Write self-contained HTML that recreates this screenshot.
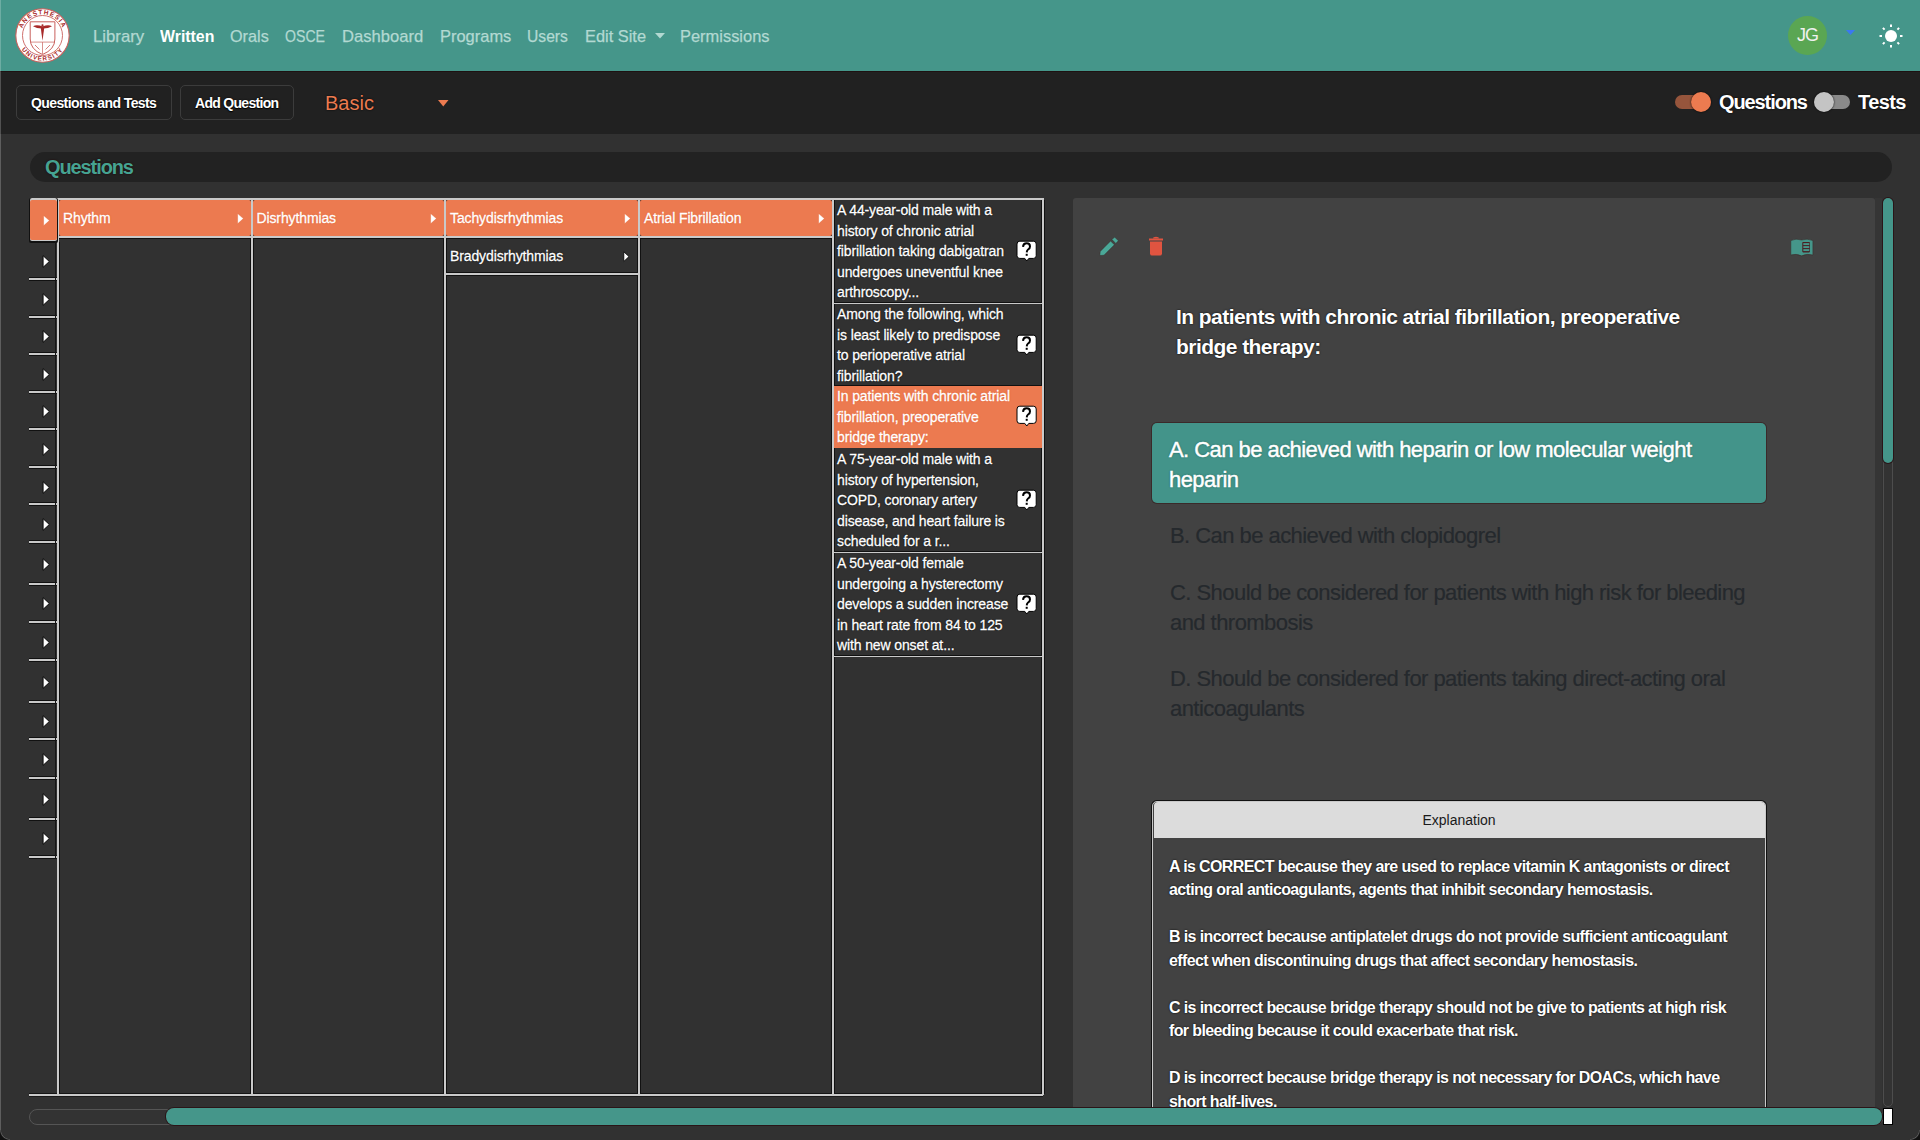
<!DOCTYPE html>
<html><head><meta charset="utf-8">
<style>
*{box-sizing:border-box;margin:0;padding:0}
html,body{-webkit-font-smoothing:antialiased;width:1920px;height:1140px;overflow:hidden;background:#313131;font-family:"Liberation Sans",sans-serif}
.abs{position:absolute}
#nav{position:absolute;left:0;top:0;width:1920px;height:71px;background:#45968a}
#navline{position:absolute;left:0;top:71px;width:1920px;height:1px;background:#1e1212}
.ni{position:absolute;top:27px;transform-origin:0 0;font-size:17px;line-height:20px;color:#b3d9d2;-webkit-text-stroke:0.25px #b3d9d2;white-space:nowrap}
#tool{position:absolute;left:0;top:72px;width:1920px;height:62px;background:#212121}
.btn{position:absolute;top:85px;height:35px;border:1px solid #3c3c3c;border-radius:5px;background:#212121}
.btxt{position:absolute;top:95px;font-size:14px;line-height:16px;font-weight:bold;color:#fff;white-space:nowrap;text-shadow:0 0 2px #000,0 1px 1px #000}
#pill{position:absolute;left:30px;top:152px;width:1862px;height:30px;border-radius:15px;background:#222}
.cell{position:absolute;font-size:14px;line-height:20.5px;color:#fff;white-space:nowrap;letter-spacing:-0.12px;-webkit-text-stroke:0.3px #fff;text-shadow:0 0 1.5px #000,0 0 1px #000}
</style></head><body>
<div id="nav"></div>
<div id="navline"></div>
<div id="tool"></div>

<!-- logo -->
<svg class="abs" style="left:15px;top:8px" width="55" height="55" viewBox="0 0 55 55">
 <defs>
  <path id="arcT" d="M6.3 27.5 A21.2 21.2 0 0 1 48.7 27.5"/>
  <path id="arcB" d="M2.3 27.5 A25.2 25.2 0 0 0 52.7 27.5"/>
 </defs>
 <circle cx="27.5" cy="27.5" r="26.7" fill="#fff" stroke="#c9605c" stroke-width="1.1"/>
 <circle cx="27.5" cy="27.5" r="20" fill="none" stroke="#c9605c" stroke-width="0.9"/>
 <text font-size="6.4" fill="#a82a2a" font-family="Liberation Sans" font-weight="bold" letter-spacing="1.1"><textPath href="#arcT" startOffset="50%" text-anchor="middle">ANESTHESIA</textPath></text>
 <text font-size="6.2" fill="#a82a2a" font-family="Liberation Sans" font-weight="bold" letter-spacing="1.2"><textPath href="#arcB" startOffset="50%" text-anchor="middle">UNIVERSITY</textPath></text>
 <path d="M15.2 13.8 H39.9 V31 Q39.9 41.5 27.5 46.5 Q15.2 41.5 15.2 31 Z" fill="#fff" stroke="#c9605c" stroke-width="1"/>
 <path d="M15.2 34.1 H39.9 M27.5 34.1 V46" stroke="#c9605c" stroke-width="0.7"/>
 <path d="M18 18.2 Q22 16.2 27.5 18.6 Q33 16.2 37 18.2 Q33 20.6 27.5 20.4 Q22 20.6 18 18.2Z" fill="#a82a2a"/>
 <path d="M25.6 18.5 H29.4 L27.5 32.8 Z" fill="#a82a2a"/>
 <circle cx="27.5" cy="17.3" r="1.1" fill="#a82a2a"/>
 <path d="M20 37 L24.5 41.5 M30.5 41.5 L35 37" stroke="#c9605c" stroke-width="0.8"/>
</svg>
<div class="ni" style="left:93.0px;transform:scaleX(0.986)">Library</div>
<div class="ni" style="left:159.8px;transform:scaleX(0.934);color:#fff;font-weight:bold;-webkit-text-stroke:0">Written</div>
<div class="ni" style="left:230.4px;transform:scaleX(0.954)">Orals</div>
<div class="ni" style="left:285.4px;transform:scaleX(0.830)">OSCE</div>
<div class="ni" style="left:341.7px;transform:scaleX(0.977)">Dashboard</div>
<div class="ni" style="left:439.5px;transform:scaleX(0.968)">Programs</div>
<div class="ni" style="left:527.1px;transform:scaleX(0.921)">Users</div>
<div class="ni" style="left:584.8px;transform:scaleX(0.964)">Edit Site</div>
<div class="ni" style="left:679.5px;transform:scaleX(0.967)">Permissions</div>
<svg class="abs" style="left:655px;top:33px" width="10" height="6"><path d="M0 0H10L5 5.5Z" fill="#b3d9d2"/></svg>
<!-- avatar -->
<div class="abs" style="left:1788px;top:16px;width:39px;height:39px;border-radius:50%;background:#5aa653;color:#f0f0f0;font-size:18px;line-height:39px;text-align:center;letter-spacing:-1px">JG</div>
<svg class="abs" style="left:1846px;top:30px" width="10" height="6"><path d="M0 0H9L4.5 5Z" fill="#3a78f2"/></svg>
<svg class="abs" style="left:1878px;top:23px" width="26" height="26" viewBox="0 0 26 26">
 <circle cx="13" cy="13" r="6" fill="#fff"/>
 <g stroke="#fff" stroke-width="2" stroke-linecap="butt">
  <path d="M13 1.5V4 M13 22V24.5 M1.5 13H4 M22 13H24.5 M4.9 4.9L6.6 6.6 M19.4 19.4L21.1 21.1 M4.9 21.1L6.6 19.4 M19.4 6.6L21.1 4.9"/>
 </g>
</svg>
<!-- toolbar -->
<div class="btn" style="left:16px;width:156px"></div>
<div class="btxt" style="left:31px;letter-spacing:-0.6px">Questions and Tests</div>
<div class="btn" style="left:180px;width:114px"></div>
<div class="btxt" style="left:195px;letter-spacing:-0.7px">Add Question</div>
<div class="abs" style="left:325px;top:92px;font-size:20px;line-height:22px;color:#ec7b50;text-shadow:0 0 2px #000">Basic</div>
<svg class="abs" style="left:438px;top:100px" width="11" height="7"><path d="M0 0H10.5L5.25 6.5Z" fill="#ec7b50"/></svg>
<!-- toggles -->
<div class="abs" style="left:1675px;top:95px;width:36px;height:14px;border-radius:7px;background:#96553c"></div>
<div class="abs" style="left:1691px;top:92px;width:20px;height:20px;border-radius:50%;background:#ec7b50;box-shadow:0 0 2px #000"></div>
<div class="abs" style="left:1719px;top:91px;font-size:20px;line-height:22px;font-weight:bold;color:#fff;letter-spacing:-1.1px;text-shadow:0 0 2px #000">Questions</div>
<div class="abs" style="left:1814px;top:95px;width:36px;height:14px;border-radius:7px;background:#8a8a8a"></div>
<div class="abs" style="left:1814px;top:92px;width:20px;height:20px;border-radius:50%;background:#c4c4c4;box-shadow:0 0 2px #000"></div>
<div class="abs" style="left:1858px;top:91px;font-size:20px;line-height:22px;font-weight:bold;color:#fff;letter-spacing:-0.6px;text-shadow:0 0 2px #000">Tests</div>
<div class="abs" style="left:59px;top:242px;width:1px;height:851px;background:#111"></div>
<div class="abs" style="left:249.5px;top:239px;width:1px;height:854px;background:#111"></div>
<div class="abs" style="left:252.5px;top:239px;width:1px;height:854px;background:#111"></div>
<div class="abs" style="left:443px;top:239px;width:1px;height:854px;background:#111"></div>
<div class="abs" style="left:446px;top:239px;width:1px;height:854px;background:#111"></div>
<div class="abs" style="left:637px;top:239px;width:1px;height:854px;background:#111"></div>
<div class="abs" style="left:640px;top:239px;width:1px;height:854px;background:#111"></div>
<div class="abs" style="left:831px;top:200px;width:1px;height:893px;background:#111"></div>
<div class="abs" style="left:833.5px;top:200px;width:1px;height:893px;background:#111"></div>
<div class="abs" style="left:1041px;top:200px;width:1px;height:893px;background:#111"></div>
<div class="abs" style="left:29px;top:1093px;width:1014px;height:1px;background:#151515"></div>
<div class="abs" style="left:1043.5px;top:200px;width:1px;height:894px;background:#111"></div>
<div class="abs" style="left:29px;top:1095.5px;width:1014px;height:1px;background:#1a1a1a"></div>
<!-- pill -->
<div id="pill"></div>
<div class="abs" style="left:45px;top:156px;font-size:20px;line-height:22px;font-weight:bold;color:#45a392;letter-spacing:-1.1px;text-shadow:0 0 2px #200">Questions</div>
<div class="abs" style="left:57px;top:198px;width:2px;height:897px;background:#c9c9c9"></div>
<div class="abs" style="left:250.5px;top:198px;width:2px;height:897px;background:#c9c9c9"></div>
<div class="abs" style="left:444px;top:198px;width:2px;height:897px;background:#c9c9c9"></div>
<div class="abs" style="left:638px;top:198px;width:2px;height:897px;background:#c9c9c9"></div>
<div class="abs" style="left:832px;top:198px;width:1.5px;height:897px;background:#c9c9c9"></div>
<div class="abs" style="left:1042px;top:198px;width:1.5px;height:897px;background:#c9c9c9"></div>
<div class="abs" style="left:57px;top:198px;width:986px;height:1.5px;background:#c9c9c9"></div>
<div class="abs" style="left:29px;top:1094px;width:1014px;height:1.5px;background:#c9c9c9"></div>
<div class="abs" style="left:28.5px;top:197.5px;width:29px;height:45px;background:#111;border-radius:2px"></div><div class="abs" style="left:29.5px;top:198px;width:27.5px;height:43px;background:#c9c9c9;border-radius:2px"></div><div class="abs" style="left:29.5px;top:199.5px;width:27.5px;height:40.5px;background:#ec7a50;border-radius:2px"></div>
<svg class="abs" style="left:42.5px;top:214.8px" width="9" height="13"><path d="M0.6 0.4L6.4 5.6L0.6 10.8Z" fill="#fff" stroke="#e2622f" stroke-width="0.4"/></svg>
<svg class="abs" style="left:41.5px;top:254.5px" width="9" height="13"><path d="M1.1 0.7L7.3 6.5L1.1 12.3Z" fill="#fff" stroke="#000" stroke-width="0.9" stroke-linejoin="miter"/></svg>
<svg class="abs" style="left:41.5px;top:292.5px" width="9" height="13"><path d="M1.1 0.7L7.3 6.5L1.1 12.3Z" fill="#fff" stroke="#000" stroke-width="0.9" stroke-linejoin="miter"/></svg>
<svg class="abs" style="left:41.5px;top:329.5px" width="9" height="13"><path d="M1.1 0.7L7.3 6.5L1.1 12.3Z" fill="#fff" stroke="#000" stroke-width="0.9" stroke-linejoin="miter"/></svg>
<svg class="abs" style="left:41.5px;top:367.5px" width="9" height="13"><path d="M1.1 0.7L7.3 6.5L1.1 12.3Z" fill="#fff" stroke="#000" stroke-width="0.9" stroke-linejoin="miter"/></svg>
<svg class="abs" style="left:41.5px;top:405.1px" width="9" height="13"><path d="M1.1 0.7L7.3 6.5L1.1 12.3Z" fill="#fff" stroke="#000" stroke-width="0.9" stroke-linejoin="miter"/></svg>
<svg class="abs" style="left:41.5px;top:442.9px" width="9" height="13"><path d="M1.1 0.7L7.3 6.5L1.1 12.3Z" fill="#fff" stroke="#000" stroke-width="0.9" stroke-linejoin="miter"/></svg>
<svg class="abs" style="left:41.5px;top:480.5px" width="9" height="13"><path d="M1.1 0.7L7.3 6.5L1.1 12.3Z" fill="#fff" stroke="#000" stroke-width="0.9" stroke-linejoin="miter"/></svg>
<svg class="abs" style="left:41.5px;top:518.2px" width="9" height="13"><path d="M1.1 0.7L7.3 6.5L1.1 12.3Z" fill="#fff" stroke="#000" stroke-width="0.9" stroke-linejoin="miter"/></svg>
<svg class="abs" style="left:41.5px;top:557.8px" width="9" height="13"><path d="M1.1 0.7L7.3 6.5L1.1 12.3Z" fill="#fff" stroke="#000" stroke-width="0.9" stroke-linejoin="miter"/></svg>
<svg class="abs" style="left:41.5px;top:596.5px" width="9" height="13"><path d="M1.1 0.7L7.3 6.5L1.1 12.3Z" fill="#fff" stroke="#000" stroke-width="0.9" stroke-linejoin="miter"/></svg>
<svg class="abs" style="left:41.5px;top:635.5px" width="9" height="13"><path d="M1.1 0.7L7.3 6.5L1.1 12.3Z" fill="#fff" stroke="#000" stroke-width="0.9" stroke-linejoin="miter"/></svg>
<svg class="abs" style="left:41.5px;top:675.5px" width="9" height="13"><path d="M1.1 0.7L7.3 6.5L1.1 12.3Z" fill="#fff" stroke="#000" stroke-width="0.9" stroke-linejoin="miter"/></svg>
<svg class="abs" style="left:41.5px;top:714.5px" width="9" height="13"><path d="M1.1 0.7L7.3 6.5L1.1 12.3Z" fill="#fff" stroke="#000" stroke-width="0.9" stroke-linejoin="miter"/></svg>
<svg class="abs" style="left:41.5px;top:752.5px" width="9" height="13"><path d="M1.1 0.7L7.3 6.5L1.1 12.3Z" fill="#fff" stroke="#000" stroke-width="0.9" stroke-linejoin="miter"/></svg>
<svg class="abs" style="left:41.5px;top:792.8px" width="9" height="13"><path d="M1.1 0.7L7.3 6.5L1.1 12.3Z" fill="#fff" stroke="#000" stroke-width="0.9" stroke-linejoin="miter"/></svg>
<svg class="abs" style="left:41.5px;top:832.2px" width="9" height="13"><path d="M1.1 0.7L7.3 6.5L1.1 12.3Z" fill="#fff" stroke="#000" stroke-width="0.9" stroke-linejoin="miter"/></svg>
<div class="abs" style="left:29px;top:276.8px;width:28px;height:1px;background:#111"></div>
<div class="abs" style="left:29px;top:277.8px;width:28px;height:2px;background:#c9c9c9"></div><div class="abs" style="left:29px;top:279.8px;width:28px;height:1px;background:#111"></div>
<div class="abs" style="left:29px;top:314.7px;width:28px;height:1px;background:#111"></div>
<div class="abs" style="left:29px;top:315.7px;width:28px;height:2px;background:#c9c9c9"></div><div class="abs" style="left:29px;top:317.7px;width:28px;height:1px;background:#111"></div>
<div class="abs" style="left:29px;top:352.0px;width:28px;height:1px;background:#111"></div>
<div class="abs" style="left:29px;top:353.0px;width:28px;height:2px;background:#c9c9c9"></div><div class="abs" style="left:29px;top:355.0px;width:28px;height:1px;background:#111"></div>
<div class="abs" style="left:29px;top:389.9px;width:28px;height:1px;background:#111"></div>
<div class="abs" style="left:29px;top:390.9px;width:28px;height:2px;background:#c9c9c9"></div><div class="abs" style="left:29px;top:392.9px;width:28px;height:1px;background:#111"></div>
<div class="abs" style="left:29px;top:427.2px;width:28px;height:1px;background:#111"></div>
<div class="abs" style="left:29px;top:428.2px;width:28px;height:2px;background:#c9c9c9"></div><div class="abs" style="left:29px;top:430.2px;width:28px;height:1px;background:#111"></div>
<div class="abs" style="left:29px;top:465.1px;width:28px;height:1px;background:#111"></div>
<div class="abs" style="left:29px;top:466.1px;width:28px;height:2px;background:#c9c9c9"></div><div class="abs" style="left:29px;top:468.1px;width:28px;height:1px;background:#111"></div>
<div class="abs" style="left:29px;top:502.2px;width:28px;height:1px;background:#111"></div>
<div class="abs" style="left:29px;top:503.2px;width:28px;height:2px;background:#c9c9c9"></div><div class="abs" style="left:29px;top:505.2px;width:28px;height:1px;background:#111"></div>
<div class="abs" style="left:29px;top:540.2px;width:28px;height:1px;background:#111"></div>
<div class="abs" style="left:29px;top:541.2px;width:28px;height:2px;background:#c9c9c9"></div><div class="abs" style="left:29px;top:543.2px;width:28px;height:1px;background:#111"></div>
<div class="abs" style="left:29px;top:582.2px;width:28px;height:1px;background:#111"></div>
<div class="abs" style="left:29px;top:583.2px;width:28px;height:2px;background:#c9c9c9"></div><div class="abs" style="left:29px;top:585.2px;width:28px;height:1px;background:#111"></div>
<div class="abs" style="left:29px;top:620.4px;width:28px;height:1px;background:#111"></div>
<div class="abs" style="left:29px;top:621.4px;width:28px;height:2px;background:#c9c9c9"></div><div class="abs" style="left:29px;top:623.4px;width:28px;height:1px;background:#111"></div>
<div class="abs" style="left:29px;top:657.7px;width:28px;height:1px;background:#111"></div>
<div class="abs" style="left:29px;top:658.7px;width:28px;height:2px;background:#c9c9c9"></div><div class="abs" style="left:29px;top:660.7px;width:28px;height:1px;background:#111"></div>
<div class="abs" style="left:29px;top:700.0px;width:28px;height:1px;background:#111"></div>
<div class="abs" style="left:29px;top:701.0px;width:28px;height:2px;background:#c9c9c9"></div><div class="abs" style="left:29px;top:703.0px;width:28px;height:1px;background:#111"></div>
<div class="abs" style="left:29px;top:737.3px;width:28px;height:1px;background:#111"></div>
<div class="abs" style="left:29px;top:738.3px;width:28px;height:2px;background:#c9c9c9"></div><div class="abs" style="left:29px;top:740.3px;width:28px;height:1px;background:#111"></div>
<div class="abs" style="left:29px;top:775.5px;width:28px;height:1px;background:#111"></div>
<div class="abs" style="left:29px;top:776.5px;width:28px;height:2px;background:#c9c9c9"></div><div class="abs" style="left:29px;top:778.5px;width:28px;height:1px;background:#111"></div>
<div class="abs" style="left:29px;top:817.2px;width:28px;height:1px;background:#111"></div>
<div class="abs" style="left:29px;top:818.2px;width:28px;height:2px;background:#c9c9c9"></div><div class="abs" style="left:29px;top:820.2px;width:28px;height:1px;background:#111"></div>
<div class="abs" style="left:29px;top:855.1px;width:28px;height:1px;background:#111"></div>
<div class="abs" style="left:29px;top:856.1px;width:28px;height:2px;background:#c9c9c9"></div><div class="abs" style="left:29px;top:858.1px;width:28px;height:1px;background:#111"></div>
<div class="abs" style="left:55px;top:241px;width:1px;height:617px;background:#151515"></div>
<div class="abs" style="left:59px;top:199.5px;width:191.5px;height:36.5px;background:#ec7a50;border-radius:2px"></div>
<div class="abs" style="left:59px;top:236px;width:191.5px;height:2px;background:#c9c9c9"></div>
<div class="abs" style="left:59px;top:238px;width:191.5px;height:1px;background:#111"></div>
<div class="cell" style="left:63px;top:208px;text-shadow:0 0 1.5px #d84a18">Rhythm</div>
<svg class="abs" style="left:236.5px;top:213.3px" width="9" height="13"><path d="M0.6 0.4L6.4 5.6L0.6 10.8Z" fill="#fff" stroke="#e2622f" stroke-width="0.4"/></svg>
<div class="abs" style="left:252.5px;top:199.5px;width:191.5px;height:36.5px;background:#ec7a50;border-radius:2px"></div>
<div class="abs" style="left:252.5px;top:236px;width:191.5px;height:2px;background:#c9c9c9"></div>
<div class="abs" style="left:252.5px;top:238px;width:191.5px;height:1px;background:#111"></div>
<div class="cell" style="left:256.5px;top:208px;text-shadow:0 0 1.5px #d84a18">Disrhythmias</div>
<svg class="abs" style="left:430.0px;top:213.3px" width="9" height="13"><path d="M0.6 0.4L6.4 5.6L0.6 10.8Z" fill="#fff" stroke="#e2622f" stroke-width="0.4"/></svg>
<div class="abs" style="left:446px;top:199.5px;width:192px;height:36.5px;background:#ec7a50;border-radius:2px"></div>
<div class="abs" style="left:446px;top:236px;width:192px;height:2px;background:#c9c9c9"></div>
<div class="abs" style="left:446px;top:238px;width:192px;height:1px;background:#111"></div>
<div class="cell" style="left:450px;top:208px;text-shadow:0 0 1.5px #d84a18">Tachydisrhythmias</div>
<svg class="abs" style="left:623.5px;top:213.3px" width="9" height="13"><path d="M0.6 0.4L6.4 5.6L0.6 10.8Z" fill="#fff" stroke="#e2622f" stroke-width="0.4"/></svg>
<div class="abs" style="left:640px;top:199.5px;width:192px;height:36.5px;background:#ec7a50;border-radius:2px"></div>
<div class="abs" style="left:640px;top:236px;width:192px;height:2px;background:#c9c9c9"></div>
<div class="abs" style="left:640px;top:238px;width:192px;height:1px;background:#111"></div>
<div class="cell" style="left:644px;top:208px;text-shadow:0 0 1.5px #d84a18">Atrial Fibrillation</div>
<svg class="abs" style="left:817.5px;top:213.3px" width="9" height="13"><path d="M0.6 0.4L6.4 5.6L0.6 10.8Z" fill="#fff" stroke="#e2622f" stroke-width="0.4"/></svg>
<div class="cell" style="left:450px;top:246px">Bradydisrhythmias</div>
<svg class="abs" style="left:623px;top:250.5px" width="9" height="13"><path d="M0.8 0.8L6 5.6L0.8 10.4Z" fill="#fff" stroke="#000" stroke-width="0.8"/></svg>
<div class="abs" style="left:446px;top:272px;width:192px;height:1px;background:#111"></div>
<div class="abs" style="left:446px;top:273px;width:192px;height:2px;background:#c9c9c9"></div>
<div class="abs" style="left:446px;top:275px;width:192px;height:1px;background:#111"></div>
<div class="cell" style="left:837px;top:200px">A 44-year-old male with a<br>history of chronic atrial<br>fibrillation taking dabigatran<br>undergoes uneventful knee<br>arthroscopy...</div>
<svg class="abs" style="left:1016px;top:239.75px" width="21" height="23" viewBox="0 0 21 23"><path d="M3.8 1.2H17.4Q20.2 1.2 20.2 4V15.8Q20.2 18.4 17.4 18.4H12.8L10.8 21L8.8 18.4H3.8Q1 18.4 1 15.8V4Q1 1.2 3.8 1.2Z" fill="#fff" stroke="#000" stroke-width="1"/><path d="M7 6.8Q7.3 3.3 10.6 3.3Q14 3.3 14 6.4Q14 8.3 12.1 9.5Q10.9 10.3 10.7 12.4" fill="none" stroke="#000" stroke-width="2"/><rect x="9.7" y="13.8" width="2" height="2" fill="#000"/></svg>
<div class="abs" style="left:834px;top:301.5px;width:208px;height:1px;background:#111"></div>
<div class="abs" style="left:834px;top:302.5px;width:208px;height:1.5px;background:#c9c9c9"></div>
<div class="cell" style="left:837px;top:304px">Among the following, which<br>is least likely to predispose<br>to perioperative atrial<br>fibrillation?</div>
<svg class="abs" style="left:1016px;top:333.5px" width="21" height="23" viewBox="0 0 21 23"><path d="M3.8 1.2H17.4Q20.2 1.2 20.2 4V15.8Q20.2 18.4 17.4 18.4H12.8L10.8 21L8.8 18.4H3.8Q1 18.4 1 15.8V4Q1 1.2 3.8 1.2Z" fill="#fff" stroke="#000" stroke-width="1"/><path d="M7 6.8Q7.3 3.3 10.6 3.3Q14 3.3 14 6.4Q14 8.3 12.1 9.5Q10.9 10.3 10.7 12.4" fill="none" stroke="#000" stroke-width="2"/><rect x="9.7" y="13.8" width="2" height="2" fill="#000"/></svg>
<div class="abs" style="left:834px;top:385.0px;width:208px;height:1px;background:#111"></div>
<div class="abs" style="left:834px;top:386.0px;width:208px;height:1.5px;background:#c9c9c9"></div>
<div class="abs" style="left:834px;top:386px;width:208px;height:61.5px;background:#ec7a50"></div>
<div class="cell" style="left:837px;top:386px;text-shadow:0 0 1.5px #d84a18">In patients with chronic atrial<br>fibrillation, preoperative<br>bridge therapy:</div>
<svg class="abs" style="left:1016px;top:405.25px" width="21" height="23" viewBox="0 0 21 23"><path d="M3.8 1.2H17.4Q20.2 1.2 20.2 4V15.8Q20.2 18.4 17.4 18.4H12.8L10.8 21L8.8 18.4H3.8Q1 18.4 1 15.8V4Q1 1.2 3.8 1.2Z" fill="#fff" stroke="#000" stroke-width="1"/><path d="M7 6.8Q7.3 3.3 10.6 3.3Q14 3.3 14 6.4Q14 8.3 12.1 9.5Q10.9 10.3 10.7 12.4" fill="none" stroke="#000" stroke-width="2"/><rect x="9.7" y="13.8" width="2" height="2" fill="#000"/></svg>
<div class="cell" style="left:837px;top:449px">A 75-year-old male with a<br>history of hypertension,<br>COPD, coronary artery<br>disease, and heart failure is<br>scheduled for a r...</div>
<svg class="abs" style="left:1016px;top:488.75px" width="21" height="23" viewBox="0 0 21 23"><path d="M3.8 1.2H17.4Q20.2 1.2 20.2 4V15.8Q20.2 18.4 17.4 18.4H12.8L10.8 21L8.8 18.4H3.8Q1 18.4 1 15.8V4Q1 1.2 3.8 1.2Z" fill="#fff" stroke="#000" stroke-width="1"/><path d="M7 6.8Q7.3 3.3 10.6 3.3Q14 3.3 14 6.4Q14 8.3 12.1 9.5Q10.9 10.3 10.7 12.4" fill="none" stroke="#000" stroke-width="2"/><rect x="9.7" y="13.8" width="2" height="2" fill="#000"/></svg>
<div class="abs" style="left:834px;top:550.5px;width:208px;height:1px;background:#111"></div>
<div class="abs" style="left:834px;top:551.5px;width:208px;height:1.5px;background:#c9c9c9"></div>
<div class="cell" style="left:837px;top:553px">A 50-year-old female<br>undergoing a hysterectomy<br>develops a sudden increase<br>in heart rate from 84 to 125<br>with new onset at...</div>
<svg class="abs" style="left:1016px;top:592.75px" width="21" height="23" viewBox="0 0 21 23"><path d="M3.8 1.2H17.4Q20.2 1.2 20.2 4V15.8Q20.2 18.4 17.4 18.4H12.8L10.8 21L8.8 18.4H3.8Q1 18.4 1 15.8V4Q1 1.2 3.8 1.2Z" fill="#fff" stroke="#000" stroke-width="1"/><path d="M7 6.8Q7.3 3.3 10.6 3.3Q14 3.3 14 6.4Q14 8.3 12.1 9.5Q10.9 10.3 10.7 12.4" fill="none" stroke="#000" stroke-width="2"/><rect x="9.7" y="13.8" width="2" height="2" fill="#000"/></svg>
<div class="abs" style="left:834px;top:654.5px;width:208px;height:1px;background:#111"></div>
<div class="abs" style="left:834px;top:655.5px;width:208px;height:1.5px;background:#c9c9c9"></div>
<div class="abs" style="left:1073px;top:198px;width:802px;height:910px;background:#424242;border-radius:3px 3px 0 0"></div>
<div class="abs" style="left:1875px;top:198px;width:7px;height:910px;background:#353535"></div>
<div class="abs" style="left:1883px;top:198px;width:10px;height:909px;border-radius:5px;background:#333;border:1px solid #4d4d4d"></div>
<div class="abs" style="left:1882.5px;top:197.5px;width:10.5px;height:265px;border-radius:5.25px;background:#45968a;box-shadow:0 0 0 1px #2a1518"></div>

<svg class="abs" style="left:1098px;top:235px" width="22" height="22" viewBox="0 0 22 22">
<path d="M1.8 20.6 L2.2 16.4 L12.6 6 L16.4 9.8 L6 20.2 Z" fill="#4aa898" stroke="#3a2a2a" stroke-width="0.5"/>
<path d="M14 4.6 L16.6 2 L20.4 5.8 L17.8 8.4 Z" fill="#4aa898" stroke="#3a2a2a" stroke-width="0.5"/>
</svg>
<svg class="abs" style="left:1147px;top:235px" width="18" height="22" viewBox="0 0 18 22">
<path d="M2 3.5 H16 V5.5 H2 Z" fill="#e05440"/>
<path d="M6 3.5 Q6 1.7 9 1.7 Q12 1.7 12 3.5 Z" fill="#e05440"/>
<path d="M3 6.5 H15 V18.5 Q15 20.5 13 20.5 H5 Q3 20.5 3 18.5 Z" fill="#e05440"/>
</svg>
<svg class="abs" style="left:1789px;top:237px" width="25" height="20" viewBox="0 0 25 20">
<path d="M1.8 3.6 Q7 1 12.6 3 Q18 1 23.9 3.6 V18 Q18 16.4 12.6 18.8 Q7 16.4 1.8 18 Z" fill="#45968a" stroke="#3a2626" stroke-width="0.5"/>
<rect x="13.3" y="5" width="7.6" height="10.4" rx="0.8" fill="#4a1e22"/>
<rect x="14.3" y="6.1" width="6" height="2" fill="#45968a"/>
<rect x="14.3" y="9.1" width="6" height="2" fill="#45968a"/>
<rect x="14.3" y="12.1" width="6" height="2" fill="#45968a"/>
</svg>
<div class="abs" style="left:1176px;top:302px;font-size:21px;line-height:29.8px;font-weight:bold;color:#fff;white-space:nowrap;letter-spacing:-0.55px;text-shadow:0 0 2px #000">In patients with chronic atrial fibrillation, preoperative<br>bridge therapy:</div>
<div class="abs" style="left:1152px;top:423px;width:614px;height:79.5px;background:#43948a;border-radius:5px;box-shadow:0 0 0 1px #3a2a2a"></div>
<div class="abs" style="left:1169px;top:435px;font-size:22px;line-height:30px;white-space:nowrap;letter-spacing:-0.55px;color:#fff;-webkit-text-stroke:0.45px #fff;text-shadow:0 0 2px #1a5a50">A. Can be achieved with heparin or low molecular weight<br>heparin</div>
<div class="abs" style="left:1170px;top:521px;font-size:22px;line-height:30px;white-space:nowrap;letter-spacing:-0.55px;color:#25292d;-webkit-text-stroke:0.2px #25292d">B. Can be achieved with clopidogrel</div>
<div class="abs" style="left:1170px;top:577.5px;font-size:22px;line-height:30px;white-space:nowrap;letter-spacing:-0.55px;color:#25292d;-webkit-text-stroke:0.2px #25292d">C. Should be considered for patients with high risk for bleeding<br>and thrombosis</div>
<div class="abs" style="left:1170px;top:663.5px;font-size:22px;line-height:30px;white-space:nowrap;letter-spacing:-0.55px;color:#25292d;-webkit-text-stroke:0.2px #25292d">D. Should be considered for patients taking direct-acting oral<br>anticoagulants</div>
<div class="abs" style="left:0;top:0;width:1920px;height:1108px;overflow:hidden">
<div class="abs" style="left:1152px;top:801px;width:614px;height:320px;border:1.5px solid #c9c9c9;border-radius:5px;box-shadow:0 0 0 1px #111"></div>
<div class="abs" style="left:1153.5px;top:802px;width:611px;height:36px;background:#dcdcdc;border-radius:4px 4px 0 0"></div>
<div class="abs" style="left:1153px;top:811px;width:612px;text-align:center;font-size:14px;line-height:18px;color:#1a1a1a">Explanation</div>
<div class="abs" style="left:1169px;top:855px;font-size:16px;line-height:23.45px;font-weight:bold;color:#fff;white-space:nowrap;letter-spacing:-0.62px;text-shadow:0 0 2px #000">A is CORRECT because they are used to replace vitamin K antagonists or direct<br>acting oral anticoagulants, agents that inhibit secondary hemostasis.<br><br>B is incorrect because antiplatelet drugs do not provide sufficient anticoagulant<br>effect when discontinuing drugs that affect secondary hemostasis.<br><br>C is incorrect because bridge therapy should not be give to patients at high risk<br>for bleeding because it could exacerbate that risk.<br><br>D is incorrect because bridge therapy is not necessary for DOACs, which have<br>short half-lives.</div>
</div>
<div class="abs" style="left:29px;top:1108.5px;width:1855px;height:16px;border-radius:8px;background:#333;border:1px solid #555"></div>
<div class="abs" style="left:166px;top:1108px;width:1716px;height:16.5px;border-radius:8px;background:#45968a;box-shadow:0 0 0 1px #2a1518"></div>
<div class="abs" style="left:1882.5px;top:1107.5px;width:10.5px;height:17.5px;background:#fff;border:1px solid #000"></div>
<div class="abs" style="left:0;top:0;width:1px;height:1140px;background:rgba(255,255,255,0.22)"></div>
<div class="abs" style="left:0;top:1130px;width:10px;height:10px;background:radial-gradient(circle at 10px 0,transparent 8.6px,#5a5a5a 9.3px,#111 10.3px)"></div>
<div class="abs" style="left:1910px;top:1130px;width:10px;height:10px;background:radial-gradient(circle at 0 0,transparent 8.6px,#5a5a5a 9.3px,#111 10.3px)"></div>
</body></html>
